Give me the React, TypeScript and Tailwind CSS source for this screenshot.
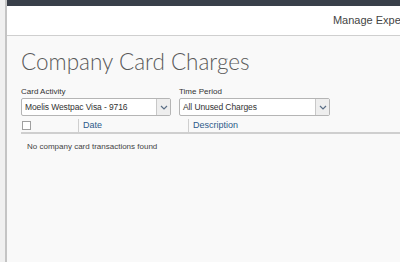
import React from "react";

function Chevron() {
  return (
    <svg width="8" height="5" viewBox="0 0 8 5" fill="none">
      <path d="M1 1l3 3 3-3" stroke="#5a6e86" strokeWidth="1.2" />
    </svg>
  );
}

function Select({ value, width }: { value: string; width: string }) {
  return (
    <div className={`flex h-[18px] ${width} border border-[#b5b5b5] rounded-[2px] bg-white`}>
      <div className="flex-1 flex items-center pl-[3px] text-[8.5px] tracking-[-0.1px] text-[#333] whitespace-nowrap overflow-hidden">{value}</div>
      <div className="w-[14px] flex items-center justify-center border-l border-[#c8c8c8] bg-[#eeeeee]">
        <Chevron />
      </div>
    </div>
  );
}

export default function App() {
  return (
    <div className="w-[400px] h-[262px] flex overflow-hidden bg-[#f9f9f9]" style={{ fontFamily: '"Liberation Sans", Arial, sans-serif' }}>
      <div className="w-[7px] bg-[#f0f0f0] border-r-2 border-[#c4c4c4] shrink-0" />
      <div className="flex-1 flex flex-col">
        <div className="h-[6px] bg-[#39404a]" />
        <div className="h-[30px] bg-white border-b border-[#cfcfcf] flex items-center justify-end">
          <span className="text-[11px] text-[#444] whitespace-nowrap mr-[-24px]">Manage Expenses</span>
        </div>
        <div className="flex-1 pl-[14px] pt-[11px]">
          <h1 className="text-[22.5px] font-light text-[#5a5a5a] leading-[29px] whitespace-nowrap" style={{ fontFamily: 'Lato, sans-serif' }}>
            Company Card Charges
          </h1>
          <div className="flex gap-[8px] mt-[11px]">
            <div className="flex flex-col">
              <span className="text-[8px] text-[#333] leading-[10px] mb-[1px]">Card Activity</span>
              <Select value="Moelis Westpac Visa - 9716" width="w-[150px]" />
            </div>
            <div className="flex flex-col">
              <span className="text-[8px] text-[#333] leading-[10px] mb-[1px]">Time Period</span>
              <Select value="All Unused Charges" width="w-[151px]" />
            </div>
          </div>
          <div className="flex items-center h-[15px] mt-[3px] border-b-2 border-[#cfcfcf]">
            <div className="w-[58px] h-full flex items-center pl-[1px] border-r border-[#cfcfcf]">
              <div className="w-[9px] h-[9px] border border-[#a0a0a0] bg-white" />
            </div>
            <div className="w-[110px] h-full flex items-center pl-[4px] border-r border-[#cfcfcf] text-[9px] text-[#2d5a8a]">Date</div>
            <div className="flex-1 h-full flex items-center pl-[4px] text-[9px] text-[#2d5a8a]">Description</div>
          </div>
          <div className="text-[8px] text-[#444] pl-[6px] mt-[7px]">No company card transactions found</div>
        </div>
      </div>
    </div>
  );
}
